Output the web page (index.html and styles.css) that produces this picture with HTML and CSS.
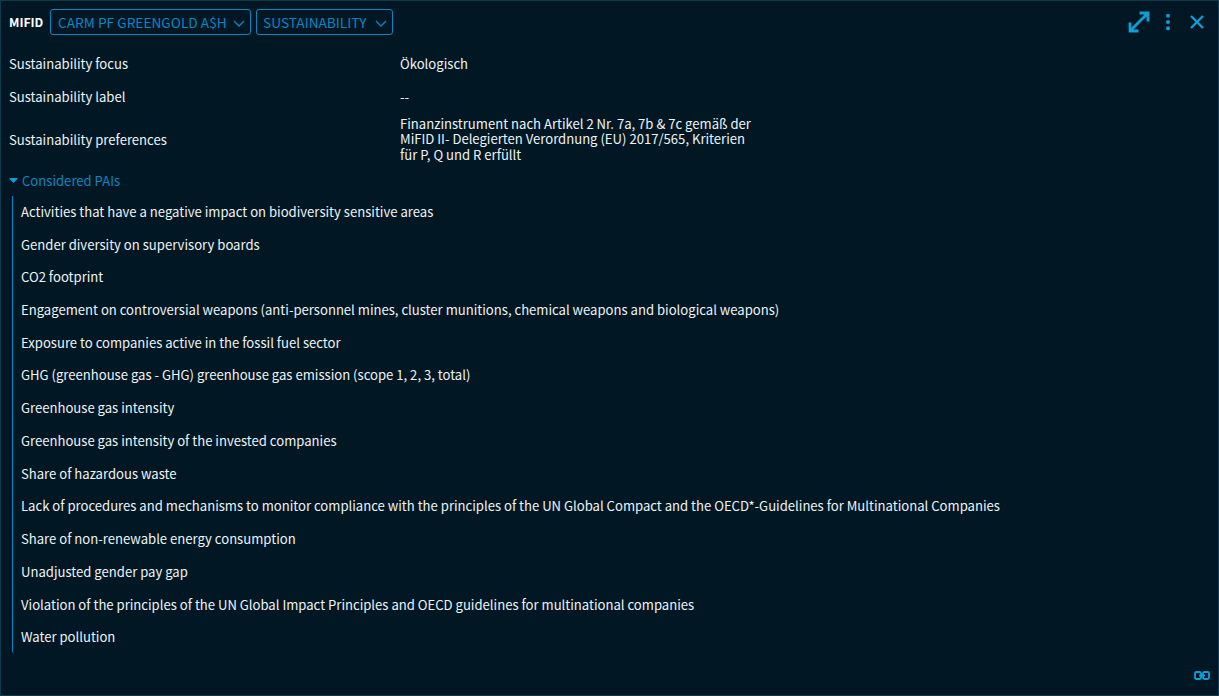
FILE: index.html
```html
<!DOCTYPE html>
<html lang="en">
<head>
  <meta charset="UTF-8">
  <title>MIFID</title>
  <link rel="stylesheet" href="styles.css">
</head>
<body>

  <div class="panel">
    <!-- Header -->
    <header class="topbar">
      <span class="title">MIFID</span>
      <button class="select select-fund">CARM PF GREENGOLD A$H
        <svg class="chevron" viewBox="0 0 12 7"><path d="M1 1l5 5 5-5"/></svg>
      </button>
      <button class="select">SUSTAINABILITY
        <svg class="chevron" viewBox="0 0 12 7"><path d="M1 1l5 5 5-5"/></svg>
      </button>
      <div class="actions">
        <svg class="icon-expand" viewBox="0 0 22 22"><path d="M3 19L19 3M11.500 2H20v8.500M2 11.500V20h8.500"/></svg>
        <svg class="icon-more" viewBox="0 0 6 20"><circle cx="3" cy="3" r="2.200"/><circle cx="3" cy="10" r="2.200"/><circle cx="3" cy="17" r="2.200"/></svg>
        <svg class="icon-close" viewBox="0 0 14 14"><path d="M1 1l12 12M13 1L1 13"/></svg>
      </div>
    </header>

    <!-- Details -->
    <div class="details">
      <div class="row"><span class="label">Sustainability focus</span><span>Ökologisch</span></div>
      <div class="row"><span class="label">Sustainability label</span><span>--</span></div>
      <div class="row row-tall">
        <span class="label">Sustainability preferences</span>
        <span>Finanzinstrument nach Artikel 2 Nr. 7a, 7b &amp; 7c gemäß der<br>MiFID II- Delegierten Verordnung (EU) 2017/565, Kriterien<br>für P, Q und R erfüllt</span>
      </div>
    </div>

    <!-- Considered PAIs -->
    <div class="section-head">
      <svg class="caret" viewBox="0 0 10 6"><path d="M0 1q0-1 1-1h8q1 0 1 1L5 6z"/></svg>
      Considered PAIs
    </div>
    <ul class="pai-list">
      <li>Activities that have a negative impact on biodiversity sensitive areas</li>
      <li>Gender diversity on supervisory boards</li>
      <li>CO2 footprint</li>
      <li>Engagement on controversial weapons (anti-personnel mines, cluster munitions, chemical weapons and biological weapons)</li>
      <li>Exposure to companies active in the fossil fuel sector</li>
      <li>GHG (greenhouse gas - GHG) greenhouse gas emission (scope 1, 2, 3, total)</li>
      <li>Greenhouse gas intensity</li>
      <li>Greenhouse gas intensity of the invested companies</li>
      <li>Share of hazardous waste</li>
      <li>Lack of procedures and mechanisms to monitor compliance with the principles of the UN Global Compact and the OECD*-Guidelines for Multinational Companies</li>
      <li>Share of non-renewable energy consumption</li>
      <li>Unadjusted gender pay gap</li>
      <li>Violation of the principles of the UN Global Impact Principles and OECD guidelines for multinational companies</li>
      <li>Water pollution</li>
    </ul>

    <svg class="icon-link" viewBox="0 0 16 9"><rect x="1" y="1" width="6" height="7" rx="1.500"/><rect x="9" y="1" width="6" height="7" rx="1.500"/><path d="M5 4.500h6"/></svg>
  </div>

</body>
</html>
```
FILE: styles.css
```css
* {
  box-sizing: border-box;
}

html, body {
  height: 100%;
}

body {
  margin: 0;
  font-family: 'Noto Sans CJK SC', 'Lato', sans-serif;
  font-size: 13.1px;
  color: #eef3f6;
  background: #011824;
}

.panel {
  position: relative;
  height: 696px;
  padding: 0 8px;
  border: 1px solid #0d3b4d;
  overflow: hidden;
}

/* Header */
.topbar {
  display: flex;
  align-items: center;
  height: 26px;
  margin-top: 8px;
}

.title {
  width: 41px;
  font-size: 12.2px;
  font-weight: bold;
  color: #fff;
}

.select {
  display: flex;
  align-items: center;
  justify-content: space-between;
  height: 26px;
  width: 137px;
  margin-right: 5px;
  padding: 0 5px 0 6px;
  font-family: inherit;
  font-size: 13.7px;
  white-space: nowrap;
  color: #0a86c0;
  background: transparent;
  border: 1px solid #0a86c0;
  border-radius: 3px;
}

.select-fund {
  width: 201px;
  padding-left: 7px;
}

.chevron {
  width: 12px;
  height: 7px;
  margin-top: 2px;
  fill: none;
  stroke: #0a86c0;
  stroke-width: 1.3;
}

.actions {
  display: flex;
  align-items: center;
  margin-left: auto;
  padding-right: 6px;
}

.actions svg {
  display: block;
}

.icon-expand {
  width: 22px;
  height: 22px;
  fill: none;
  stroke: #0a9fd6;
  stroke-width: 2.8;
}

.icon-more {
  width: 6px;
  height: 18px;
  margin: 0 19px 0 15px;
  fill: #0a9fd6;
}

.icon-close {
  width: 14px;
  height: 14px;
  fill: none;
  stroke: #0a9fd6;
  stroke-width: 2.4;
}

/* Details */
.details {
  margin-top: 12px;
}

.row {
  display: grid;
  grid-template-columns: 391px 1fr;
  align-items: center;
  min-height: 33px;
  line-height: 16px;
}

.row-tall {
  min-height: 52px;
  padding: 2px 0;
  line-height: 15.5px;
}

.row-tall .label {
  padding-top: 2px;
}

/* Considered PAIs */
.section-head {
  display: flex;
  align-items: center;
  gap: 4px;
  height: 20px;
  margin-top: 5px;
  color: #0a86c0;
}

.caret {
  width: 9px;
  height: 5px;
  fill: #0a9fd6;
}

.pai-list {
  margin: 5.88px 0 0 3px;
  padding: 0 0 0 8px;
  list-style: none;
  border-left: 1px solid #0a86c0;
  border-bottom-left-radius: 2px;
}

.pai-list li {
  height: 32.72px;
  line-height: 32.72px;
  white-space: nowrap;
}

.pai-list li:last-child {
  height: 32px;
}

.icon-link {
  position: absolute;
  right: 8px;
  bottom: 15px;
  width: 16px;
  height: 9px;
  fill: none;
  stroke: #0a9fd6;
  stroke-width: 1.8;
}
```
